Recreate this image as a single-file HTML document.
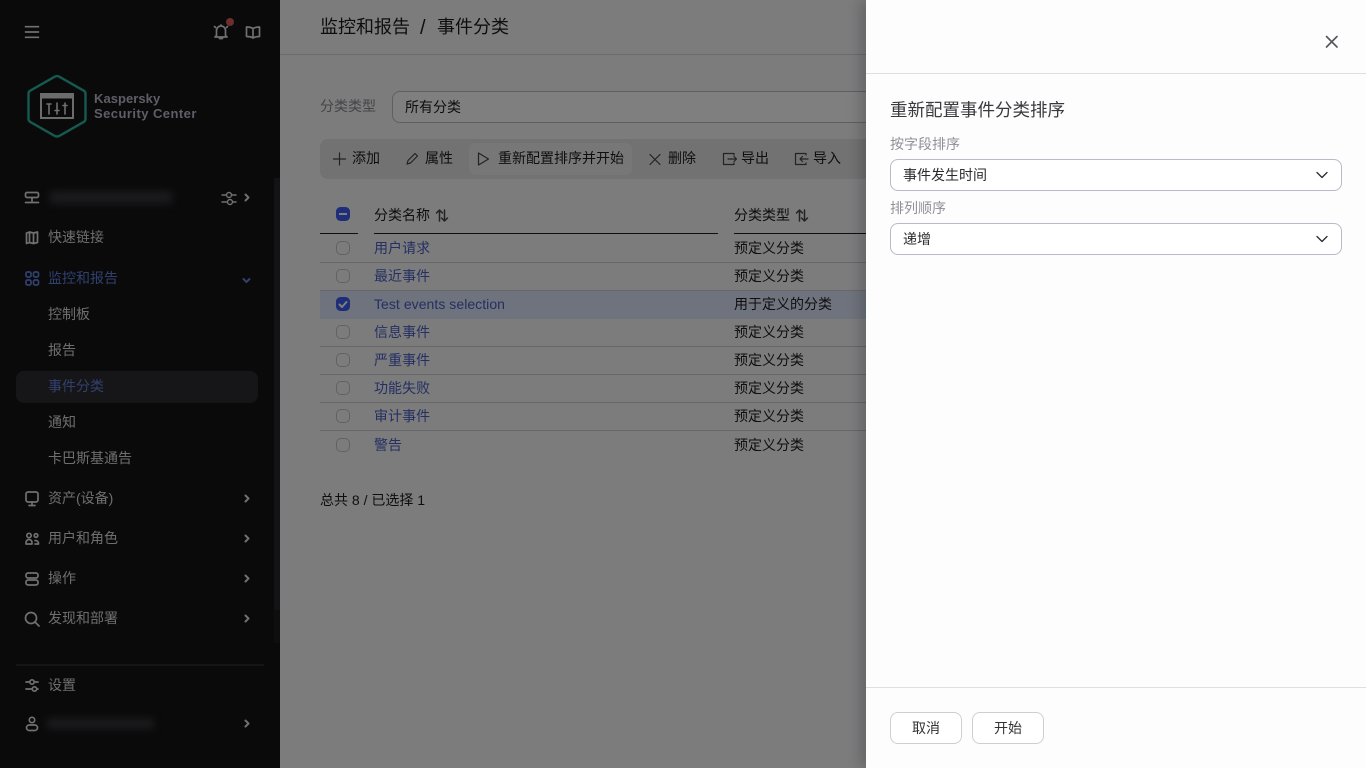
<!DOCTYPE html>
<html lang="zh">
<head>
<meta charset="utf-8">
<title>事件分类</title>
<style>
html,body{margin:0;padding:0;width:1366px;height:768px;overflow:hidden;background:#f9f9fa}
body{font-family:"Liberation Sans","Noto Sans CJK SC",sans-serif;font-size:14px;color:#1d1d1f;position:relative}
.t{position:absolute;white-space:nowrap;line-height:20px}
.a{position:absolute}
svg{position:absolute;overflow:visible;fill:none;stroke-linecap:round;stroke-linejoin:round}
#side{position:absolute;left:0;top:0;width:280px;height:768px;background:#141416}
#side .t{color:#dcdcde}
#side svg{stroke:#e0e0e2;stroke-width:1.7}
#side .blue{color:#6280dc!important}
.line{position:absolute;height:1px;background:#cfcfd3}
.cb{position:absolute;left:336px;width:14px;height:14px;box-sizing:border-box;border:1.5px solid #c4c4c8;border-radius:5px}
.lnk{color:#4a5fc4;letter-spacing:.05px}
#ov{position:absolute;left:0;top:0;width:866px;height:768px;background:rgba(0,0,0,.5)}
#panel{position:absolute;left:866px;top:0;width:500px;height:768px;background:#fdfdfe;box-shadow:-6px 0 12px rgba(0,0,0,.18)}
.sel{position:absolute;left:24px;width:450px;height:30px;border:1px solid #b9b9c9;border-radius:8px;background:#fff}
.btn{position:absolute;top:712px;width:70px;height:30px;border:1px solid #cfcfd3;border-radius:8px;background:#fff;text-align:center;line-height:30px;color:#333336}
</style>
</head>
<body>
<div id="side">
  <svg style="left:0;top:0" width="280" height="60"><path d="M25.500 26.700h13M25.500 32h13M25.500 37.300h13"/>
    <path d="M216.500 35.500v-5a4.500 4.500 0 0 1 9 0v5l1.500 1.500h-12zM219.500 38.500h3M221 25v.8M214.500 26.500l1 1M227.500 26.500l-1 1"/>
    <path d="M253 28.500c-2-1.300-4-1.500-6.500-1.500v9.500c2.500 0 4.500.2 6.500 1.500 2-1.300 4-1.500 6.500-1.500V27c-2.500 0-4.500.2-6.500 1.500zM253 28.500V38"/></svg>
  <div class="a" style="left:226px;top:18px;width:8px;height:8px;border-radius:50%;background:#d85c5c"></div>

  <svg style="left:0;top:0" width="100" height="150">
    <path d="M54.500 76.800q2.500-1.400 5 0l24.500 14q1.500 1 1.500 3v25q0 2-1.500 3l-24.500 14q-2.500 1.400-5 0l-24.500-14q-1.500-1-1.500-3v-25q0-2 1.500-3z" style="stroke:#2bb5a0;stroke-width:2.400"/>
    <rect x="41" y="94" width="32" height="24" style="stroke:#d8d8da;stroke-width:2;stroke-linecap:butt;stroke-linejoin:miter"/>
    <rect x="41" y="94" width="32" height="4" style="fill:#d8d8da;stroke:#d8d8da;stroke-width:1;stroke-linejoin:miter"/>
    <path d="M49 104v10M47 104h4M57 103v11M55 110.500h4M65 103v11M63 105.500h4" style="stroke-width:1.600"/>
  </svg>
  <div class="t" style="left:94px;top:91px;font-size:13px;font-weight:700;line-height:15px;color:#bcbcd0!important;white-space:normal;width:130px;letter-spacing:.05px">Kaspersky<br><span style="letter-spacing:.45px">Security Center</span></div>

  <div class="a" style="left:274px;top:178px;width:6px;height:432px;background:#26262a"></div>
  <div class="a" style="left:274px;top:610px;width:6px;height:33px;background:#1c1c1e"></div>

  <svg style="left:0;top:0" width="60" height="210"><rect x="25.500" y="192.500" width="13" height="5" rx="1.500"/><path d="M32 197.500v5M25.500 202.500h13"/></svg>
  <div class="a" style="left:50px;top:191px;width:122px;height:13px;background:#363639;filter:blur(4px)"></div>
  <svg style="left:0;top:0" width="280" height="210"><path d="M222 195h4M232 195h4M222 202h5M233 202h3" style="stroke-width:1.400"/><circle cx="229" cy="195" r="2.500" style="stroke-width:1.400"/><circle cx="230" cy="202" r="2.500" style="stroke-width:1.400"/><path d="M245.500 194.500l3 3-3 3" style="stroke-width:2"/></svg>

  <svg style="left:0;top:0" width="60" height="250"><path d="M26.500 233l3-1 4 1 4-1v10.500l-4 1-4-1-3 1zM29.500 232v10.500M33.500 233v10.500"/></svg>
  <div class="t" style="left:48px;top:227px">快速链接</div>

  <svg style="left:0;top:0" width="60" height="300"><g style="stroke:#6280dc"><rect x="26" y="272" width="5" height="5" rx="1.500"/><rect x="33.500" y="272" width="5" height="5" rx="1.500"/><rect x="26" y="280" width="5" height="5" rx="1.500"/><rect x="33.500" y="280" width="5" height="5" rx="1.500"/></g></svg>
  <div class="t blue" style="left:48px;top:268px">监控和报告</div>
  <svg style="left:0;top:0" width="280" height="300"><path d="M243.500 279l3 3 3-3" style="stroke:#6280dc;stroke-width:2"/></svg>

  <div class="t" style="left:48px;top:304px">控制板</div>
  <div class="t" style="left:48px;top:340px">报告</div>
  <div class="a" style="left:16px;top:371px;width:242px;height:32px;border-radius:8px;background:#2c2c30"></div>
  <div class="t blue" style="left:48px;top:376px">事件分类</div>
  <div class="t" style="left:48px;top:412px">通知</div>
  <div class="t" style="left:48px;top:448px">卡巴斯基通告</div>

  <svg style="left:0;top:0" width="60" height="520"><rect x="26" y="492" width="12" height="10" rx="2"/><path d="M32 502v3M29 505.500h6"/></svg>
  <div class="t" style="left:48px;top:488px">资产(设备)</div>

  <svg style="left:0;top:0" width="60" height="560"><circle cx="29" cy="535.500" r="2.200"/><circle cx="36" cy="535.500" r="1.800"/><path d="M26 544v-1.500a3 3 0 0 1 6 0V544zM35 540.500c2 0 3.500 1 3.500 3v.5H35"/></svg>
  <div class="t" style="left:48px;top:528px">用户和角色</div>

  <svg style="left:0;top:0" width="60" height="600"><rect x="26" y="573" width="12" height="5" rx="2"/><rect x="26" y="580" width="12" height="5" rx="2"/></svg>
  <div class="t" style="left:48px;top:568px">操作</div>

  <svg style="left:0;top:0" width="60" height="640"><circle cx="31" cy="618" r="5.500"/><path d="M35 622l4 4"/></svg>
  <div class="t" style="left:48px;top:608px">发现和部署</div>

  <svg style="left:0;top:0" width="280" height="740"><g style="stroke-width:2"><path d="M245.500 495.500l3 3-3 3M245.500 535.500l3 3-3 3M245.500 575.500l3 3-3 3M245.500 615.500l3 3-3 3M245.500 720.500l3 3-3 3"/></g></svg>

  <div class="a" style="left:16px;top:664px;width:248px;height:2px;background:#2b2b2e"></div>

  <svg style="left:0;top:0" width="60" height="700"><path d="M26 682h3M35 682h3M26 689h6M37 689h1"/><circle cx="32" cy="682" r="2.200"/><circle cx="34.500" cy="689" r="2.200"/></svg>
  <div class="t" style="left:48px;top:675px">设置</div>

  <svg style="left:0;top:0" width="60" height="740"><circle cx="32" cy="720" r="2.700"/><rect x="26.500" y="725" width="11" height="5.500" rx="2.700"/></svg>
  <div class="a" style="left:47px;top:718px;width:107px;height:11px;background:#363639;filter:blur(4px)"></div>
</div>

<div id="main">
  <div class="t" style="left:320px;top:15px;font-size:18px;line-height:24px">监控和报告</div>
  <div class="t" style="left:420px;top:15px;font-size:20px;line-height:26px">/</div>
  <div class="t" style="left:437px;top:15px;font-size:18px;line-height:24px">事件分类</div>
  <div class="line" style="left:280px;top:54px;width:586px;background:#d6d6d8"></div>

  <div class="t" style="left:320px;top:96px;color:#8a8a90">分类类型</div>
  <div class="a" style="left:392px;top:91px;width:500px;height:30px;border:1px solid #bcbcc8;border-radius:8px;background:#fff"></div>
  <div class="t" style="left:405px;top:97px">所有分类</div>

  <div class="a" style="left:320px;top:139px;width:560px;height:40px;border-radius:8px;background:#e4e4e6"></div>
  <div class="a" style="left:469px;top:143px;width:163px;height:32px;border-radius:6px;background:#eeeef0"></div>
  <svg style="left:0;top:0" width="866" height="180"><g style="stroke:#46464a;stroke-width:1.200">
    <path d="M339.500 153v12M333.500 159h12"/>
    <path d="M407 164l1-3.500 7-7 2.500 2.500-7 7z"/>
    <path d="M478.500 153l10 6-10 6z"/>
    <path d="M650 154.500l10 10M660 154.500l-10 10"/>
    <path d="M734 155v-1.500h-10.500v11H734V163M728 159h8.500M734 156.500l2.500 2.500-2.500 2.500"/>
    <path d="M806 155v-1.500h-10.500v11H806V163M808 159h-8M802.500 156.500L800 159l2.500 2.500"/>
  </g></svg>
  <div class="t" style="left:352px;top:148px">添加</div>
  <div class="t" style="left:425px;top:148px">属性</div>
  <div class="t" style="left:498px;top:148px">重新配置排序并开始</div>
  <div class="t" style="left:668px;top:148px">删除</div>
  <div class="t" style="left:741px;top:148px">导出</div>
  <div class="t" style="left:813px;top:148px">导入</div>

  <div class="a" style="left:336px;top:207px;width:14px;height:14px;border-radius:4.500px;background:#3e5cf0"></div>
  <div class="a" style="left:339px;top:213px;width:8px;height:2px;background:#fff"></div>
  <div class="t" style="left:374px;top:205px">分类名称</div>
  <div class="t" style="left:734px;top:205px">分类类型</div>
  <svg style="left:0;top:0" width="866" height="225"><g style="stroke:#46464a;stroke-width:1.500">
    <path d="M439.500 221v-11M436.500 213l3-3 3 3M444.500 210v11M441.500 218l3 3 3-3"/>
    <path d="M799.500 221v-11M796.500 213l3-3 3 3M804.500 210v11M801.500 218l3 3 3-3"/>
  </g></svg>
  <div class="a" style="left:320px;top:233px;width:38px;height:1px;background:#1d1d1f"></div>
  <div class="a" style="left:374px;top:233px;width:344px;height:1px;background:#1d1d1f"></div>
  <div class="a" style="left:734px;top:233px;width:132px;height:1px;background:#1d1d1f"></div>

  <div class="a" style="left:320px;top:291px;width:546px;height:28px;background:#dfe6fa"></div>
  <div class="line" style="left:320px;top:262px;width:546px"></div>
  <div class="line" style="left:320px;top:290px;width:546px"></div>
  <div class="line" style="left:320px;top:346px;width:546px"></div>
  <div class="line" style="left:320px;top:374px;width:546px"></div>
  <div class="line" style="left:320px;top:402px;width:546px"></div>
  <div class="line" style="left:320px;top:430px;width:546px"></div>

  <div class="cb" style="top:241px"></div>
  <div class="cb" style="top:269px"></div>
  <div class="a" style="left:336px;top:297px;width:14px;height:14px;border-radius:4.500px;background:#3e5cf0"></div>
  <svg style="left:0;top:0" width="400" height="320"><path d="M339.500 304.500l2.500 2.500 4.500-5" style="stroke:#fff;stroke-width:2"/></svg>
  <div class="cb" style="top:325px"></div>
  <div class="cb" style="top:353px"></div>
  <div class="cb" style="top:381px"></div>
  <div class="cb" style="top:409px"></div>
  <div class="cb" style="top:438px"></div>

  <div class="t lnk" style="left:374px;top:238px">用户请求</div>
  <div class="t lnk" style="left:374px;top:266px">最近事件</div>
  <div class="t lnk" style="left:374px;top:294px">Test events selection</div>
  <div class="t lnk" style="left:374px;top:322px">信息事件</div>
  <div class="t lnk" style="left:374px;top:350px">严重事件</div>
  <div class="t lnk" style="left:374px;top:378px">功能失败</div>
  <div class="t lnk" style="left:374px;top:406px">审计事件</div>
  <div class="t lnk" style="left:374px;top:435px">警告</div>

  <div class="t" style="left:734px;top:238px">预定义分类</div>
  <div class="t" style="left:734px;top:266px">预定义分类</div>
  <div class="t" style="left:734px;top:294px">用于定义的分类</div>
  <div class="t" style="left:734px;top:322px">预定义分类</div>
  <div class="t" style="left:734px;top:350px">预定义分类</div>
  <div class="t" style="left:734px;top:378px">预定义分类</div>
  <div class="t" style="left:734px;top:406px">预定义分类</div>
  <div class="t" style="left:734px;top:435px">预定义分类</div>

  <div class="t" style="left:320px;top:490px">总共 8 / 已选择 1</div>
</div>

<div id="ov"></div>

<div id="panel">
  <svg style="left:0;top:0" width="500" height="60"><path d="M460.500 36.500l10.500 10.500M471 36.500L460.500 47" style="stroke:#55555a;stroke-width:1.600"/></svg>
  <div class="a" style="left:0;top:73px;width:500px;height:1px;background:#dfdfe2"></div>
  <div class="t" style="left:24px;top:98px;font-size:17.500px;line-height:24px;color:#3a3a3e">重新配置事件分类排序</div>
  <div class="t" style="left:24px;top:134px;font-size:14px;color:#909099">按字段排序</div>
  <div class="sel" style="top:159px"></div>
  <div class="t" style="left:37px;top:165px;color:#2b2b2e">事件发生时间</div>
  <div class="t" style="left:24px;top:198px;font-size:14px;color:#909099">排列顺序</div>
  <div class="sel" style="top:223px"></div>
  <div class="t" style="left:37px;top:229px;color:#2b2b2e">递增</div>
  <svg style="left:0;top:0" width="500" height="260"><g style="stroke:#2b2b2e;stroke-width:1.300"><path d="M451 172.500l5 5 5-5M451 236.500l5 5 5-5"/></g></svg>
  <div class="a" style="left:0;top:687px;width:500px;height:1px;background:#dfdfe2"></div>
  <div class="btn" style="left:24px">取消</div>
  <div class="btn" style="left:106px">开始</div>
</div>
</body>
</html>
